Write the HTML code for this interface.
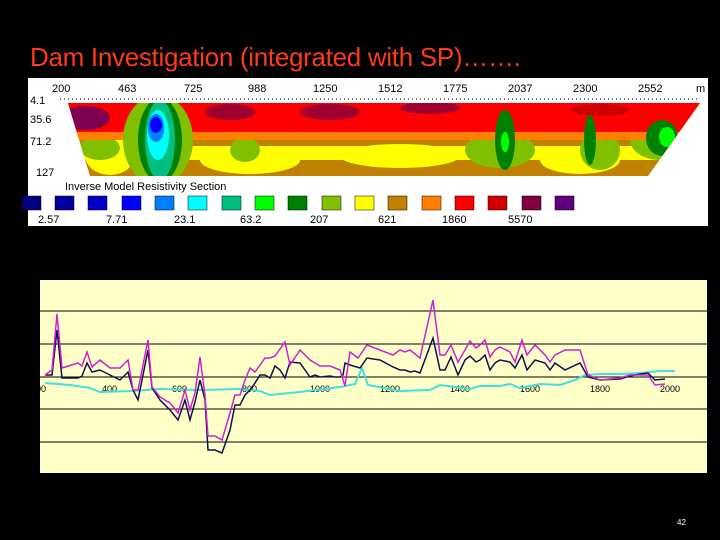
<!DOCTYPE html>
<html><head><style>
body{margin:0;width:720px;height:540px;background:#000;overflow:hidden;position:relative;font-family:"Liberation Sans",sans-serif}
.t{position:absolute;left:30px;top:42px;color:#ff3a1a;font-size:26px;letter-spacing:-0.3px}
</style></head><body>
<div class="t">Dam Investigation (integrated with SP)…….</div>
<svg width="720" height="540" style="position:absolute;left:0;top:0" font-family="Liberation Sans">
<rect x="28" y="78" width="680" height="148" fill="#fff"/>
<g font-size="11" fill="#000">
<text x="52" y="92">200</text><text x="118" y="92">463</text><text x="184" y="92">725</text><text x="248" y="92">988</text><text x="313" y="92">1250</text><text x="378" y="92">1512</text><text x="443" y="92">1775</text><text x="508" y="92">2037</text><text x="573" y="92">2300</text><text x="638" y="92">2552</text><text x="696" y="92">m</text>
<text x="30" y="104">4.1</text><text x="30" y="123">35.6</text><text x="30" y="145">71.2</text><text x="36" y="176">127</text>
<text x="65" y="190">Inverse Model Resistivity Section</text>
<text x="38" y="223">2.57</text><text x="106" y="223">7.71</text><text x="174" y="223">23.1</text><text x="240" y="223">63.2</text><text x="310" y="223">207</text><text x="378" y="223">621</text><text x="442" y="223">1860</text><text x="508" y="223">5570</text>
</g>
<line x1="60" y1="99" x2="700" y2="99" stroke="#000" stroke-dasharray="1 3"/>
<defs><clipPath id="c"><polygon points="68,103 700,103 648,176 90,176 "/></clipPath></defs>
<g clip-path="url(#c)">
<rect x="60" y="100" width="650" height="80" fill="#c08000"/>
<rect x="60" y="146" width="650" height="14" fill="#ffff00"/>
<ellipse cx="250" cy="160" rx="50" ry="14" fill="#ffff00"/>
<ellipse cx="400" cy="156" rx="60" ry="12" fill="#ffff00"/>
<ellipse cx="580" cy="160" rx="40" ry="14" fill="#ffff00"/>
<ellipse cx="110" cy="155" rx="25" ry="20" fill="#ffff00"/>
<ellipse cx="500" cy="150" rx="35" ry="18" fill="#80c000"/>
<ellipse cx="600" cy="150" rx="20" ry="20" fill="#80c000"/>
<ellipse cx="660" cy="140" rx="30" ry="20" fill="#80c000"/>
<ellipse cx="245" cy="150" rx="15" ry="12" fill="#80c000"/>
<ellipse cx="100" cy="148" rx="20" ry="12" fill="#80c000"/>
<rect x="60" y="100" width="650" height="40" fill="#ff8000"/>
<rect x="60" y="100" width="650" height="32" fill="#ff0000"/>
<ellipse cx="85" cy="118" rx="25" ry="12" fill="#800050"/>
<ellipse cx="230" cy="112" rx="25" ry="8" fill="#a00030"/>
<ellipse cx="330" cy="112" rx="30" ry="8" fill="#a00030"/>
<ellipse cx="430" cy="108" rx="30" ry="6" fill="#a00030"/>
<ellipse cx="600" cy="110" rx="30" ry="6" fill="#d00000"/>
<ellipse cx="505" cy="140" rx="10" ry="30" fill="#008000"/>
<ellipse cx="505" cy="142" rx="4" ry="10" fill="#00ff00"/>
<ellipse cx="590" cy="140" rx="6" ry="25" fill="#008000"/>
<ellipse cx="662" cy="138" rx="16" ry="18" fill="#008000"/>
<ellipse cx="667" cy="137" rx="8" ry="10" fill="#00ff00"/>
<ellipse cx="158" cy="140" rx="35" ry="45" fill="#80c000"/>
<ellipse cx="160" cy="140" rx="22" ry="42" fill="#008000"/>
<ellipse cx="160" cy="140" rx="15" ry="40" fill="#00c080"/>
<ellipse cx="158" cy="135" rx="11" ry="25" fill="#00ffff"/>
<ellipse cx="156" cy="128" rx="8" ry="14" fill="#0080ff"/>
<ellipse cx="156" cy="125" rx="6" ry="8" fill="#0000ff"/>
</g>
<g stroke="#000" stroke-width="0.5">
<rect x="22" y="196" width="19" height="14" fill="#000080"/><rect x="55" y="196" width="19" height="14" fill="#0000a0"/><rect x="88" y="196" width="19" height="14" fill="#0000c8"/><rect x="122" y="196" width="19" height="14" fill="#0000ff"/><rect x="155" y="196" width="19" height="14" fill="#0080ff"/><rect x="188" y="196" width="19" height="14" fill="#00ffff"/><rect x="222" y="196" width="19" height="14" fill="#00c080"/><rect x="255" y="196" width="19" height="14" fill="#00ff00"/><rect x="288" y="196" width="19" height="14" fill="#008000"/><rect x="322" y="196" width="19" height="14" fill="#80c000"/><rect x="355" y="196" width="19" height="14" fill="#ffff00"/><rect x="388" y="196" width="19" height="14" fill="#c08000"/><rect x="422" y="196" width="19" height="14" fill="#ff8000"/><rect x="455" y="196" width="19" height="14" fill="#ff0000"/><rect x="488" y="196" width="19" height="14" fill="#d00000"/><rect x="522" y="196" width="19" height="14" fill="#800040"/><rect x="555" y="196" width="19" height="14" fill="#600080"/>
</g>
<rect x="40" y="280" width="667" height="193" fill="#ffffc8"/>
<g stroke="#000" stroke-width="1">
<line x1="40" y1="311" x2="707" y2="311"/><line x1="40" y1="344" x2="707" y2="344"/><line x1="40" y1="377" x2="707" y2="377"/><line x1="40" y1="409" x2="707" y2="409"/><line x1="40" y1="442" x2="707" y2="442"/>
</g>
<g font-size="9" fill="#000"><text x="36" y="392">00</text><text x="102" y="392">400</text><text x="172" y="392">600</text><text x="242" y="392">800</text><text x="310" y="392">1000</text><text x="380" y="392">1200</text><text x="450" y="392">1400</text><text x="520" y="392">1600</text><text x="590" y="392">1800</text><text x="660" y="392">2000</text></g>
<polyline fill="none" stroke="#40e0e0" stroke-width="2" points="45,383 70,385 90,388 100,392 130,391 160,389 200,390 240,389 260,391 270,395 300,392 340,387 355,384 362,368 368,385 400,391 430,390 440,385 470,389 480,386 500,386 510,384 520,388 540,384 560,385 575,380 585,375 600,374 620,374 640,373 660,371 675,371"/>
<polyline fill="none" stroke="#101050" stroke-width="1.5" points="45,375 52,375 57,330 62,378 78,378 82,376 87,363 92,372 100,370 110,375 120,380 128,372 133,390 138,400 148,350 152,388 160,400 170,410 178,420 185,400 190,420 195,402 200,380 205,400 208,450 215,450 222,453 230,430 235,405 240,405 245,395 250,390 255,383 260,375 265,375 270,378 275,366 280,370 285,378 290,362 300,363 310,377 315,375 320,377 330,376 335,377 340,377 343,375 345,363 350,365 360,368 367,358 380,360 393,367 400,370 405,370 410,372 415,371 420,373 433,338 440,370 445,370 451,357 458,375 465,360 470,356 476,362 480,360 485,355 490,370 495,363 500,360 510,362 515,368 522,355 527,370 535,360 545,363 550,370 555,363 565,370 580,363 588,377 600,380 620,379 630,376 640,374 648,373 655,380 665,379"/>
<polyline fill="none" stroke="#d020d0" stroke-width="1.5" points="45,375 52,370 57,314 62,368 78,363 82,366 87,352 92,367 100,360 110,368 120,368 128,360 133,390 138,390 148,340 152,387 160,397 170,403 178,413 185,390 190,410 195,393 200,357 205,396 208,436 215,436 222,440 230,413 235,395 240,395 245,380 250,368 255,372 260,365 265,358 270,358 275,356 285,342 290,365 300,350 310,360 315,363 320,366 330,366 335,368 340,370 345,386 350,352 358,358 367,345 380,350 393,355 400,350 405,352 410,350 420,358 433,300 440,355 445,355 451,345 458,362 465,350 470,341 476,348 480,345 485,340 490,357 495,350 500,347 510,352 515,362 522,340 527,355 535,345 545,355 550,362 555,355 565,350 580,350 588,375 600,380 620,378 630,375 640,375 648,375 655,385 665,384"/>
<text x="677" y="525" font-size="8" fill="#fff">42</text>
</svg>
</body></html>
